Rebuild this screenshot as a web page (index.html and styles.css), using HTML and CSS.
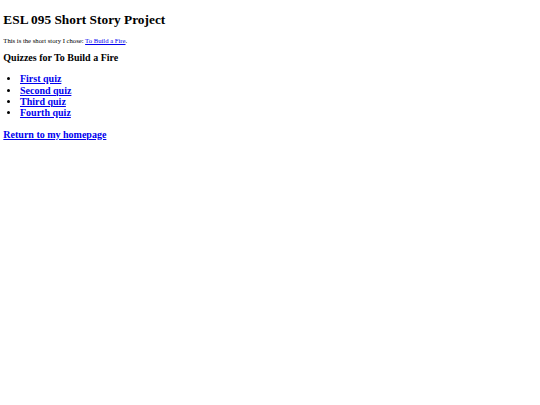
FILE: index.html
```html
<!DOCTYPE html>
<html lang="en">
<head>
<meta charset="utf-8">
<title>ESL 095 Short Story Project</title>
<link rel="stylesheet" href="styles.css">
</head>
<body>
<h1 class="title">ESL 095 Short Story Project</h1>
<p class="intro">This is the short story I chose: <a href="#">To Build a Fire</a>.</p>
<h2 class="section">Quizzes for To Build a Fire</h2>
<ul class="quizzes">
<li><a href="#">First quiz</a></li>
<li><a href="#">Second quiz</a></li>
<li><a href="#">Third quiz</a></li>
<li><a href="#">Fourth quiz</a></li>
</ul>
<h2 class="home"><a href="#">Return to my homepage</a></h2>
</body>
</html>
```

FILE: styles.css
```css
html {
  background: #ffffff;
}
body {
  margin: 3.33px;
  font-family: "Liberation Serif", "Times New Roman", serif;
  font-size: 6.67px;
  color: #000000;
}
a {
  color: #0000ee;
  text-decoration: underline;
}
.title {
  font-size: 13.33px;
  font-weight: bold;
  margin: 8.93px 0;
}
.intro {
  margin: 6.67px 0;
}
.section {
  font-size: 10px;
  font-weight: bold;
  margin: 8.3px 0;
}
.quizzes {
  margin: 10px 0;
  padding-left: 16.67px;
  font-size: 10px;
  font-weight: bold;
}
.quizzes li {
  line-height: 11.33px;
}
.home {
  margin: 10px 0;
  font-size: 10px;
  font-weight: bold;
}
```
